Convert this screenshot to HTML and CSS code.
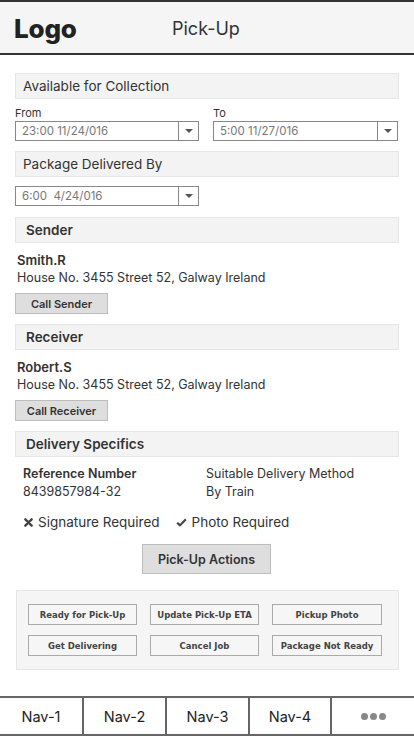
FILE: index.html
```html
<!DOCTYPE html>
<html>
<head>
<meta charset="utf-8">
<link rel="stylesheet" href="styles.css">
</head>
<body>
<div class="app">
  <header class="topbar">
    <div class="logo">Logo</div>
    <div class="title">Pick-Up</div>
  </header>
  <main class="content">
    <div class="section-head">Available for Collection</div>
    <div class="range">
      <div class="field">
        <div class="label">From</div>
        <div class="select"><span class="val">23:00 11/24/016</span><span class="arrow"><i></i></span></div>
      </div>
      <div class="field">
        <div class="label">To</div>
        <div class="select"><span class="val">5:00 11/27/016</span><span class="arrow"><i></i></span></div>
      </div>
    </div>
    <div class="section-head">Package Delivered By</div>
    <div class="range single">
      <div class="field">
        <div class="select"><span class="val">6:00&nbsp; 4/24/016</span><span class="arrow"><i></i></span></div>
      </div>
    </div>
    <div class="section-head bold">Sender</div>
    <div class="person">
      <div class="name">Smith.R</div>
      <div class="addr">House No. 3455 Street 52, Galway Ireland</div>
      <button class="btn-call">Call Sender</button>
    </div>
    <div class="section-head bold">Receiver</div>
    <div class="person">
      <div class="name">Robert.S</div>
      <div class="addr">House No. 3455 Street 52, Galway Ireland</div>
      <button class="btn-call">Call Receiver</button>
    </div>
    <div class="section-head bold">Delivery Specifics</div>
    <div class="specs">
      <div class="spec">
        <div class="spec-k bold">Reference Number</div>
        <div class="spec-v">8439857984-32</div>
      </div>
      <div class="spec">
        <div class="spec-k">Suitable Delivery Method</div>
        <div class="spec-v">By Train</div>
      </div>
    </div>
    <div class="reqs">
      <span class="req"><svg width="9" height="9" viewBox="0 0 10 10"><path d="M1.5 1.5 L8.5 8.5 M8.5 1.5 L1.5 8.5" stroke="#444" stroke-width="2.6" stroke-linecap="round"/></svg>Signature Required</span>
      <span class="req"><svg width="11" height="9" viewBox="0 0 12 10"><path d="M1.2 5.2 L4.4 8.2 L10.8 1.4" fill="none" stroke="#444" stroke-width="2.4" stroke-linejoin="round"/></svg>Photo Required</span>
    </div>
    <div class="actions-row">
      <button class="btn-actions">Pick-Up Actions</button>
    </div>
    <div class="panel">
      <button class="btn-sm">Ready for Pick-Up</button>
      <button class="btn-sm">Update Pick-Up ETA</button>
      <button class="btn-sm">Pickup Photo</button>
      <button class="btn-sm">Get Delivering</button>
      <button class="btn-sm">Cancel Job</button>
      <button class="btn-sm">Package Not Ready</button>
    </div>
  </main>
  <nav class="navbar">
    <div class="nav-item">Nav-1</div>
    <div class="nav-item">Nav-2</div>
    <div class="nav-item">Nav-3</div>
    <div class="nav-item">Nav-4</div>
    <div class="nav-item dots"><i></i><i></i><i></i></div>
  </nav>
</div>
</body>
</html>
```
FILE: styles.css
```css
* { box-sizing: border-box; }
html, body { margin: 0; padding: 0; background: #fff; }
body {
  font-family: Inter, "Noto Sans", sans-serif;
  color: #333;
  width: 414px;
  height: 736px;
  overflow: hidden;
}
.app {
  display: flex;
  flex-direction: column;
  height: 736px;
}
.topbar {
  height: 55px;
  background: #f5f5f5;
  border-top: 2px solid #333;
  border-bottom: 2px solid #333;
  display: flex;
  align-items: center;
  padding: 1px 0 0 14px;
}
.logo {
  font-size: 26px;
  font-weight: 800;
  color: #222;
  letter-spacing: -0.2px;
  width: 158px;
}
.title {
  font-size: 18px;
  color: #333;
  font-weight: 400;
}
.content {
  flex: 1;
  padding: 18px 15px 0 15px;
}
.section-head {
  height: 26px;
  background: #f3f3f3;
  border: 1px solid #e6e6e6;
  font-size: 13.5px;
  display: flex;
  align-items: center;
  padding-left: 7px;
  color: #333;
}
.section-head.bold { font-weight: 600; padding-left: 10px; }
.range {
  display: grid;
  grid-template-columns: 184px 185px;
  column-gap: 14px;
  margin-top: 7px;
  margin-bottom: 10px;
}
.range.single { margin-top: 9px; margin-bottom: 11px; }
.label {
  font-size: 11px;
  color: #333;
  height: 14px;
  line-height: 14px;
  margin-bottom: 1px;
}
.select {
  height: 20px;
  border: 1px solid #888;
  display: flex;
  align-items: stretch;
  background: #fff;
}
.val {
  flex: 1;
  font-size: 11.5px;
  color: #777;
  padding-left: 6px;
  display: flex;
  align-items: center;
}
.arrow {
  width: 20px;
  border-left: 1px solid #888;
  display: flex;
  align-items: center;
  justify-content: center;
}
.arrow i {
  width: 0;
  height: 0;
  border-left: 4px solid transparent;
  border-right: 4px solid transparent;
  border-top: 4px solid #555;
}
.person {
  padding: 9px 0 10px 2px;
}
.name {
  font-size: 13px;
  font-weight: 600;
  color: #333;
  line-height: 17px;
}
.addr {
  font-size: 12.5px;
  color: #333;
  line-height: 17px;
  margin-bottom: 7px;
}
.btn-call {
  margin-left: -2px;
  display: block;
  width: 93px;
  height: 21px;
  background: #dedede;
  border: 1px solid #bdbdbd;
  font-family: inherit;
  font-size: 11px;
  font-weight: 600;
  color: #333;
  padding: 0;
}
.specs {
  display: grid;
  grid-template-columns: 183px 1fr;
  padding: 8px 0 0 8px;
}
.spec-k {
  font-size: 12.5px;
  line-height: 18px;
}
.spec-k.bold { font-weight: 600; }
.spec-v {
  font-size: 12.5px;
  line-height: 18px;
}
.reqs {
  display: flex;
  gap: 16px;
  padding: 13px 0 0 9px;
  font-size: 13.5px;
}
.req {
  display: flex;
  align-items: center;
  gap: 5px;
}
.actions-row {
  display: flex;
  justify-content: center;
  padding-top: 14px;
  margin-left: -1px;
}
.btn-actions {
  width: 129px;
  height: 30px;
  background: #dedede;
  border: 1px solid #bdbdbd;
  font-family: inherit;
  font-size: 12.5px;
  font-weight: 600;
  color: #333;
  padding: 0;
}
.panel {
  margin: 16px 0 0 1px;
  background: #f5f5f5;
  border: 1px solid #e6e6e6;
  display: grid;
  grid-template-columns: 109px 109px 110px;
  column-gap: 13px;
  row-gap: 10px;
  padding: 13px 0 13px 11px;
}
.btn-sm {
  height: 21px;
  background: #f6f6f6;
  border: 1px solid #aaa;
  font-family: "DejaVu Sans", sans-serif;
  font-size: 8.5px;
  font-weight: 600;
  color: #444;
  padding: 0;
}
.navbar {
  height: 40px;
  border-top: 2px solid #666;
  border-bottom: 2px solid #666;
  display: grid;
  grid-template-columns: 84px 83px 83px 82px 1fr;
}
.nav-item {
  display: flex;
  align-items: center;
  justify-content: center;
  font-size: 14.5px;
  color: #222;
  border-right: 2px solid #666;
}
.nav-item:last-child { border-right: none; }
.dots { gap: 2px; }
.dots i {
  width: 7px;
  height: 7px;
  border-radius: 50%;
  background: #888;
}
```
